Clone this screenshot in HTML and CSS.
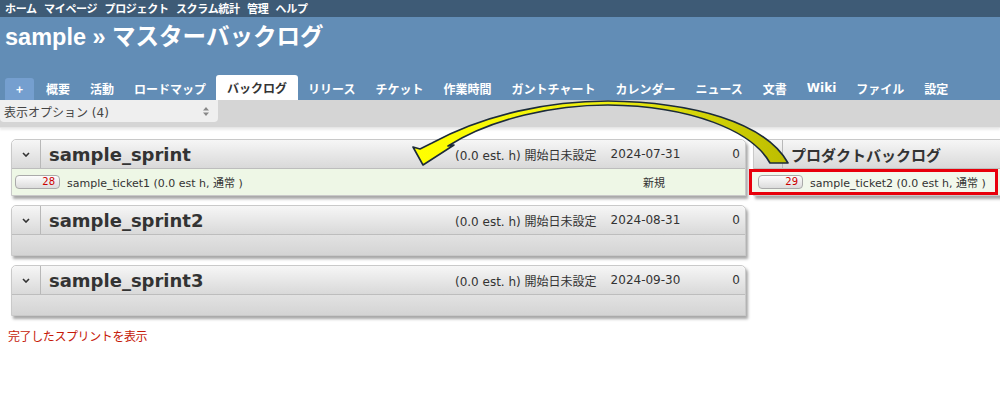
FILE: index.html
```html
<!DOCTYPE html>
<html lang="ja">

<head>
  <meta charset="UTF-8">
  <meta name="viewport" content="width=device-width, initial-scale=1.0">
  <title>マスターバックログ - sample</title>
  <link rel="stylesheet" href="styles.css">
</head>

<body>
  <div id="top-menu">
    <a href="#">ホーム</a>
    <a href="#">マイページ</a>
    <a href="#">プロジェクト</a>
    <a href="#">スクラム統計</a>
    <a href="#">管理</a>
    <a href="#">ヘルプ</a>
  </div>

  <div id="header">
    <h1>sample » マスターバックログ</h1>
    <ul class="main-menu">
      <li class="new-object">+</li>
      <li>概要</li>
      <li>活動</li>
      <li>ロードマップ</li>
      <li class="selected">バックログ</li>
      <li>リリース</li>
      <li>チケット</li>
      <li>作業時間</li>
      <li>ガントチャート</li>
      <li>カレンダー</li>
      <li>ニュース</li>
      <li>文書</li>
      <li class="latin">Wiki</li>
      <li>ファイル</li>
      <li>設定</li>
    </ul>
  </div>

  <div class="toolbar">
    <div class="view-options">
      <span>表示オプション (4)</span>
      <svg class="updown" width="6" height="9" viewBox="0 0 6 9"><path d="M0 3.5 L3 0 L6 3.5 Z M0 5.5 L3 9 L6 5.5 Z" fill="#888"/></svg>
    </div>
  </div>

  <div class="backlogs">
    <div class="sprints">
      <div class="sprint">
        <div class="sprint-header">
          <span class="toggle"><svg width="8" height="5" viewBox="0 0 8 5"><path d="M1 1 L4 4 L7 1" fill="none" stroke="#333" stroke-width="1.6"/></svg></span>
          <span class="name">sample_sprint</span>
          <span class="estimate">(0.0 est. h) 開始日未設定</span>
          <span class="date">2024-07-31</span>
          <span class="points">0</span>
        </div>
        <div class="stories">
          <div class="story">
            <span class="story-id">28</span>
            <span class="subject">sample_ticket1 (0.0 est h, 通常 )</span>
            <span class="status">新規</span>
          </div>
        </div>
      </div>

      <div class="sprint">
        <div class="sprint-header">
          <span class="toggle"><svg width="8" height="5" viewBox="0 0 8 5"><path d="M1 1 L4 4 L7 1" fill="none" stroke="#333" stroke-width="1.6"/></svg></span>
          <span class="name">sample_sprint2</span>
          <span class="estimate">(0.0 est. h) 開始日未設定</span>
          <span class="date">2024-08-31</span>
          <span class="points">0</span>
        </div>
        <div class="stories empty"></div>
      </div>

      <div class="sprint">
        <div class="sprint-header">
          <span class="toggle"><svg width="8" height="5" viewBox="0 0 8 5"><path d="M1 1 L4 4 L7 1" fill="none" stroke="#333" stroke-width="1.6"/></svg></span>
          <span class="name">sample_sprint3</span>
          <span class="estimate">(0.0 est. h) 開始日未設定</span>
          <span class="date">2024-09-30</span>
          <span class="points">0</span>
        </div>
        <div class="stories empty"></div>
      </div>

      <a class="closed-link" href="#">完了したスプリントを表示</a>
    </div>

    <div class="product-backlog">
      <div class="sprint">
        <div class="sprint-header">
          <span class="toggle"><svg width="8" height="5" viewBox="0 0 8 5"><path d="M1 1 L4 4 L7 1" fill="none" stroke="#333" stroke-width="1.6"/></svg></span>
          <span class="name jp">プロダクトバックログ</span>
        </div>
        <div class="stories">
          <div class="story highlight">
            <span class="story-id">29</span>
            <span class="subject">sample_ticket2 (0.0 est h, 通常 )</span>
          </div>
        </div>
      </div>
    </div>
  </div>

  <!-- drag arrow drawn over the page -->
  <svg class="move-arrow" width="1000" height="398" viewBox="0 0 1000 398">
    <defs>
      <linearGradient id="arrowFill" x1="420" y1="0" x2="790" y2="0" gradientUnits="userSpaceOnUse">
        <stop offset="0" stop-color="#ffff00"/>
        <stop offset="0.5" stop-color="#eeee10"/>
        <stop offset="1" stop-color="#bcbc00"/>
      </linearGradient>
    </defs>
    <path d="M432 143 C 485 114, 550 101, 608 101 C 692 102, 765 122, 788 163
             L 770 163 C 752 131, 692 106, 608 105 C 555 105, 492 118, 448 146
             L 454 145 L 423 165 L 413 147 L 420 149 Z"
      fill="url(#arrowFill)" stroke="#1c2b3a" stroke-width="1.6" stroke-linejoin="round"/>
  </svg>
</body>

</html>
```

FILE: styles.css
```css
html {
  overflow: hidden;
}

body {
  margin: 0;
  font-family: "DejaVu Sans", "Noto Sans CJK JP", sans-serif;
  font-size: 12px;
  color: #333;
  background: #fff;
  position: relative;
  width: 1000px;
  height: 398px;
}

#top-menu {
  height: 17px;
  background: #3e5b76;
  padding-left: 5px;
  font-family: "Noto Sans CJK JP", sans-serif;
  font-size: 11px;
  font-weight: bold;
  line-height: 17px;
  letter-spacing: -0.3px;
}

#top-menu a {
  color: #fff;
  text-decoration: none;
  margin-right: 5px;
}

#header {
  height: 83px;
  background: #628db6;
  display: flex;
  flex-direction: column;
  justify-content: space-between;
}

#header h1 {
  margin: 6px 0 0 5px;
  font-family: "Liberation Sans", "Noto Sans CJK JP", sans-serif;
  font-size: 23.5px;
  line-height: 28px;
  color: #fff;
}

.main-menu {
  list-style: none;
  margin: 0;
  padding: 0 0 0 5px;
  display: flex;
  align-items: flex-end;
  font-family: "Noto Sans CJK JP", sans-serif;
  font-size: 12px;
  font-weight: bold;
  color: #fff;
}

.main-menu li {
  padding: 0 10px;
  height: 23px;
  line-height: 23px;
}

.main-menu li.latin {
  font-family: "DejaVu Sans", sans-serif;
}

.main-menu .new-object {
  width: 29px;
  box-sizing: border-box;
  padding: 0;
  text-align: center;
  height: 22px;
  line-height: 22px;
  background: #759fcf;
  border-radius: 3px 3px 0 0;
  margin-right: 2px;
}

.main-menu .selected {
  background: #fff;
  color: #333;
  height: 25px;
  line-height: 26px;
  border-radius: 3px 3px 0 0;
  padding: 0 11px;
}

.toolbar {
  height: 27px;
  background: #d5d5d5;
  border-bottom: 1px solid #e6e6e6;
  box-shadow: 0 2px 2px #ececec;
}

.view-options {
  width: 218px;
  height: 22px;
  box-sizing: border-box;
  background: #efefef;
  border-radius: 0 0 4px 4px;
  padding: 0 9px 0 4px;
  display: flex;
  justify-content: space-between;
  align-items: center;
  font-family: "DejaVu Sans", "Noto Sans CJK JP", sans-serif;
  font-size: 12px;
  color: #444;
}

.backlogs {
  display: flex;
  padding: 11px 0 0 11px;
}

.sprints {
  width: 735px;
  flex-shrink: 0;
}

.product-backlog {
  width: 260px;
  flex-shrink: 0;
  margin-left: 7px;
}

.sprint {
  border: 1px solid #c9c9c9;
  border-radius: 5px 5px 0 0;
  box-shadow: 2px 3px 3px rgba(0, 0, 0, 0.35);
  margin-bottom: 9px;
  background: #fff;
}

.sprint-header {
  height: 28px;
  display: flex;
  align-items: center;
  border-radius: 5px 5px 0 0;
  background: linear-gradient(#f6f6f6, #d9d9d9);
  border-bottom: 1px solid #bdbdbd;
}

.toggle {
  width: 28px;
  height: 28px;
  border-right: 1px solid #b8b8b8;
  display: flex;
  align-items: center;
  justify-content: center;
  flex-shrink: 0;
}

.name {
  margin-left: 8px;
  font-size: 18px;
  font-weight: bold;
  color: #333;
  flex: 1;
}

.name.jp {
  font-family: "Noto Sans CJK JP", sans-serif;
  font-size: 15px;
}

.estimate {
  margin-right: 14px;
}

.date {
  margin-right: 52px;
}

.points {
  margin-right: 5px;
}

.stories {
  background: #eef7e6;
  min-height: 26px;
}

.stories.empty {
  min-height: 20px;
  background: linear-gradient(#e2e2e2, #d4d4d4);
}

.story {
  height: 26px;
  display: flex;
  align-items: center;
  font-size: 11px;
  padding-left: 3px;
}

.story-id {
  width: 45px;
  height: 14px;
  box-sizing: border-box;
  border: 1px solid #aaa;
  border-radius: 4px;
  background: linear-gradient(#fdfdfd, #dcdcdc);
  color: #c00;
  text-align: right;
  padding-right: 4px;
  line-height: 12px;
  font-size: 10px;
  flex-shrink: 0;
}

.subject {
  margin-left: 7px;
  flex: 1;
}

.status {
  margin-right: 80px;
}

.story.highlight {
  height: 26px;
  box-sizing: border-box;
  border: 3px solid #e8000b;
  margin-left: -5px;
  width: 249px;
  padding-left: 6px;
  background: #f2f8ec;
}

.closed-link {
  display: inline-block;
  margin: 2px 0 0 -3px;
  color: #c61a09;
  text-decoration: none;
  font-family: "Noto Sans CJK JP", sans-serif;
  font-size: 12px;
  letter-spacing: -0.4px;
}

.move-arrow {
  position: absolute;
  left: 0;
  top: 0;
  pointer-events: none;
}
```
